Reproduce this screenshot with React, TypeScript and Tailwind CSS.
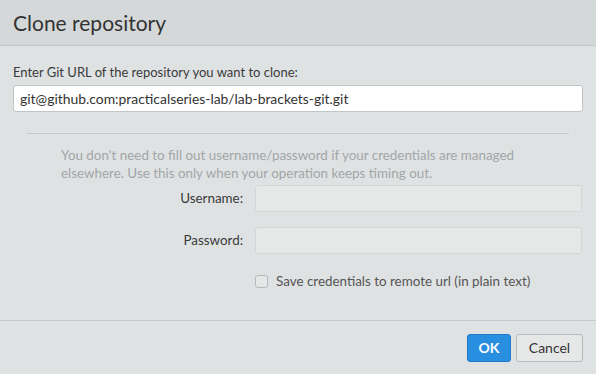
import React from 'react';

const font = { fontFamily: '"Source Sans Pro", Lato, "Open Sans", sans-serif' };

export default function App() {
  return (
    <div className="w-[596px] h-[374px] flex flex-col bg-[#dfe2e3] text-[#333]" style={font}>
      <div className="h-[46px] flex items-center px-[13px] bg-[#d5d8d9] border-b border-[#c4c7c8]">
        <h1 className="text-[21px] text-[#333] leading-none">Clone repository</h1>
      </div>
      <div className="flex-1 px-[13px] pt-[17px]">
        <label className="block text-[13px] leading-[18px] text-[#3a3a3a]">Enter Git URL of the repository you want to clone:</label>
        <input
          defaultValue="git@github.com:practicalseries-lab/lab-brackets-git.git"
          className="mt-[4px] w-[570px] h-[27px] px-[6px] text-[13.9px] bg-white border border-[#c2c5c6] rounded-[3px] outline-none text-[#333]"
          style={font}
        />
        <div className="mx-[14px] mt-[21px] border-t border-[#c6c9ca]" />
        <p className="mt-[12px] ml-[48px] text-[13.4px] leading-[18px] text-[#a2a6a8]">
          You don't need to fill out username/password if your credentials are managed<br />
          elsewhere. Use this only when your operation keeps timing out.
        </p>
        <div className="mt-[3px] grid grid-cols-[230px_327px] gap-x-[12px] gap-y-[15px] items-center text-[#3a3a3a]">
          <span className="text-right text-[13.4px]">Username:</span>
          <input disabled className="h-[27px] bg-[#e6e8e8] border border-[#d3d6d6] rounded-[3px]" />
          <span className="text-right text-[13.4px]">Password:</span>
          <input disabled type="password" className="h-[27px] bg-[#e6e8e8] border border-[#d3d6d6] rounded-[3px]" />
          <span />
          <label className="mt-[2px] flex items-center gap-[8px] text-[13.4px] text-[#555]">
            <span className="w-[13px] h-[13px] rounded-[3px] border border-[#b5b8ba] bg-[#e6e8e8]" />
            Save credentials to remote url (in plain text)
          </label>
        </div>
      </div>
      <div className="h-[54px] border-t border-[#c6c9ca] flex items-center justify-end gap-[5px] px-[13px]">
        <button className="w-[44px] h-[28px] rounded-[3px] bg-[#288edf] border border-[#1d7acb] text-white text-[14px] font-bold" style={font}>OK</button>
        <button className="w-[67px] h-[28px] rounded-[3px] bg-[#e6e8e8] border border-[#b7babb] text-[#333] text-[14px]" style={font}>Cancel</button>
      </div>
    </div>
  );
}
